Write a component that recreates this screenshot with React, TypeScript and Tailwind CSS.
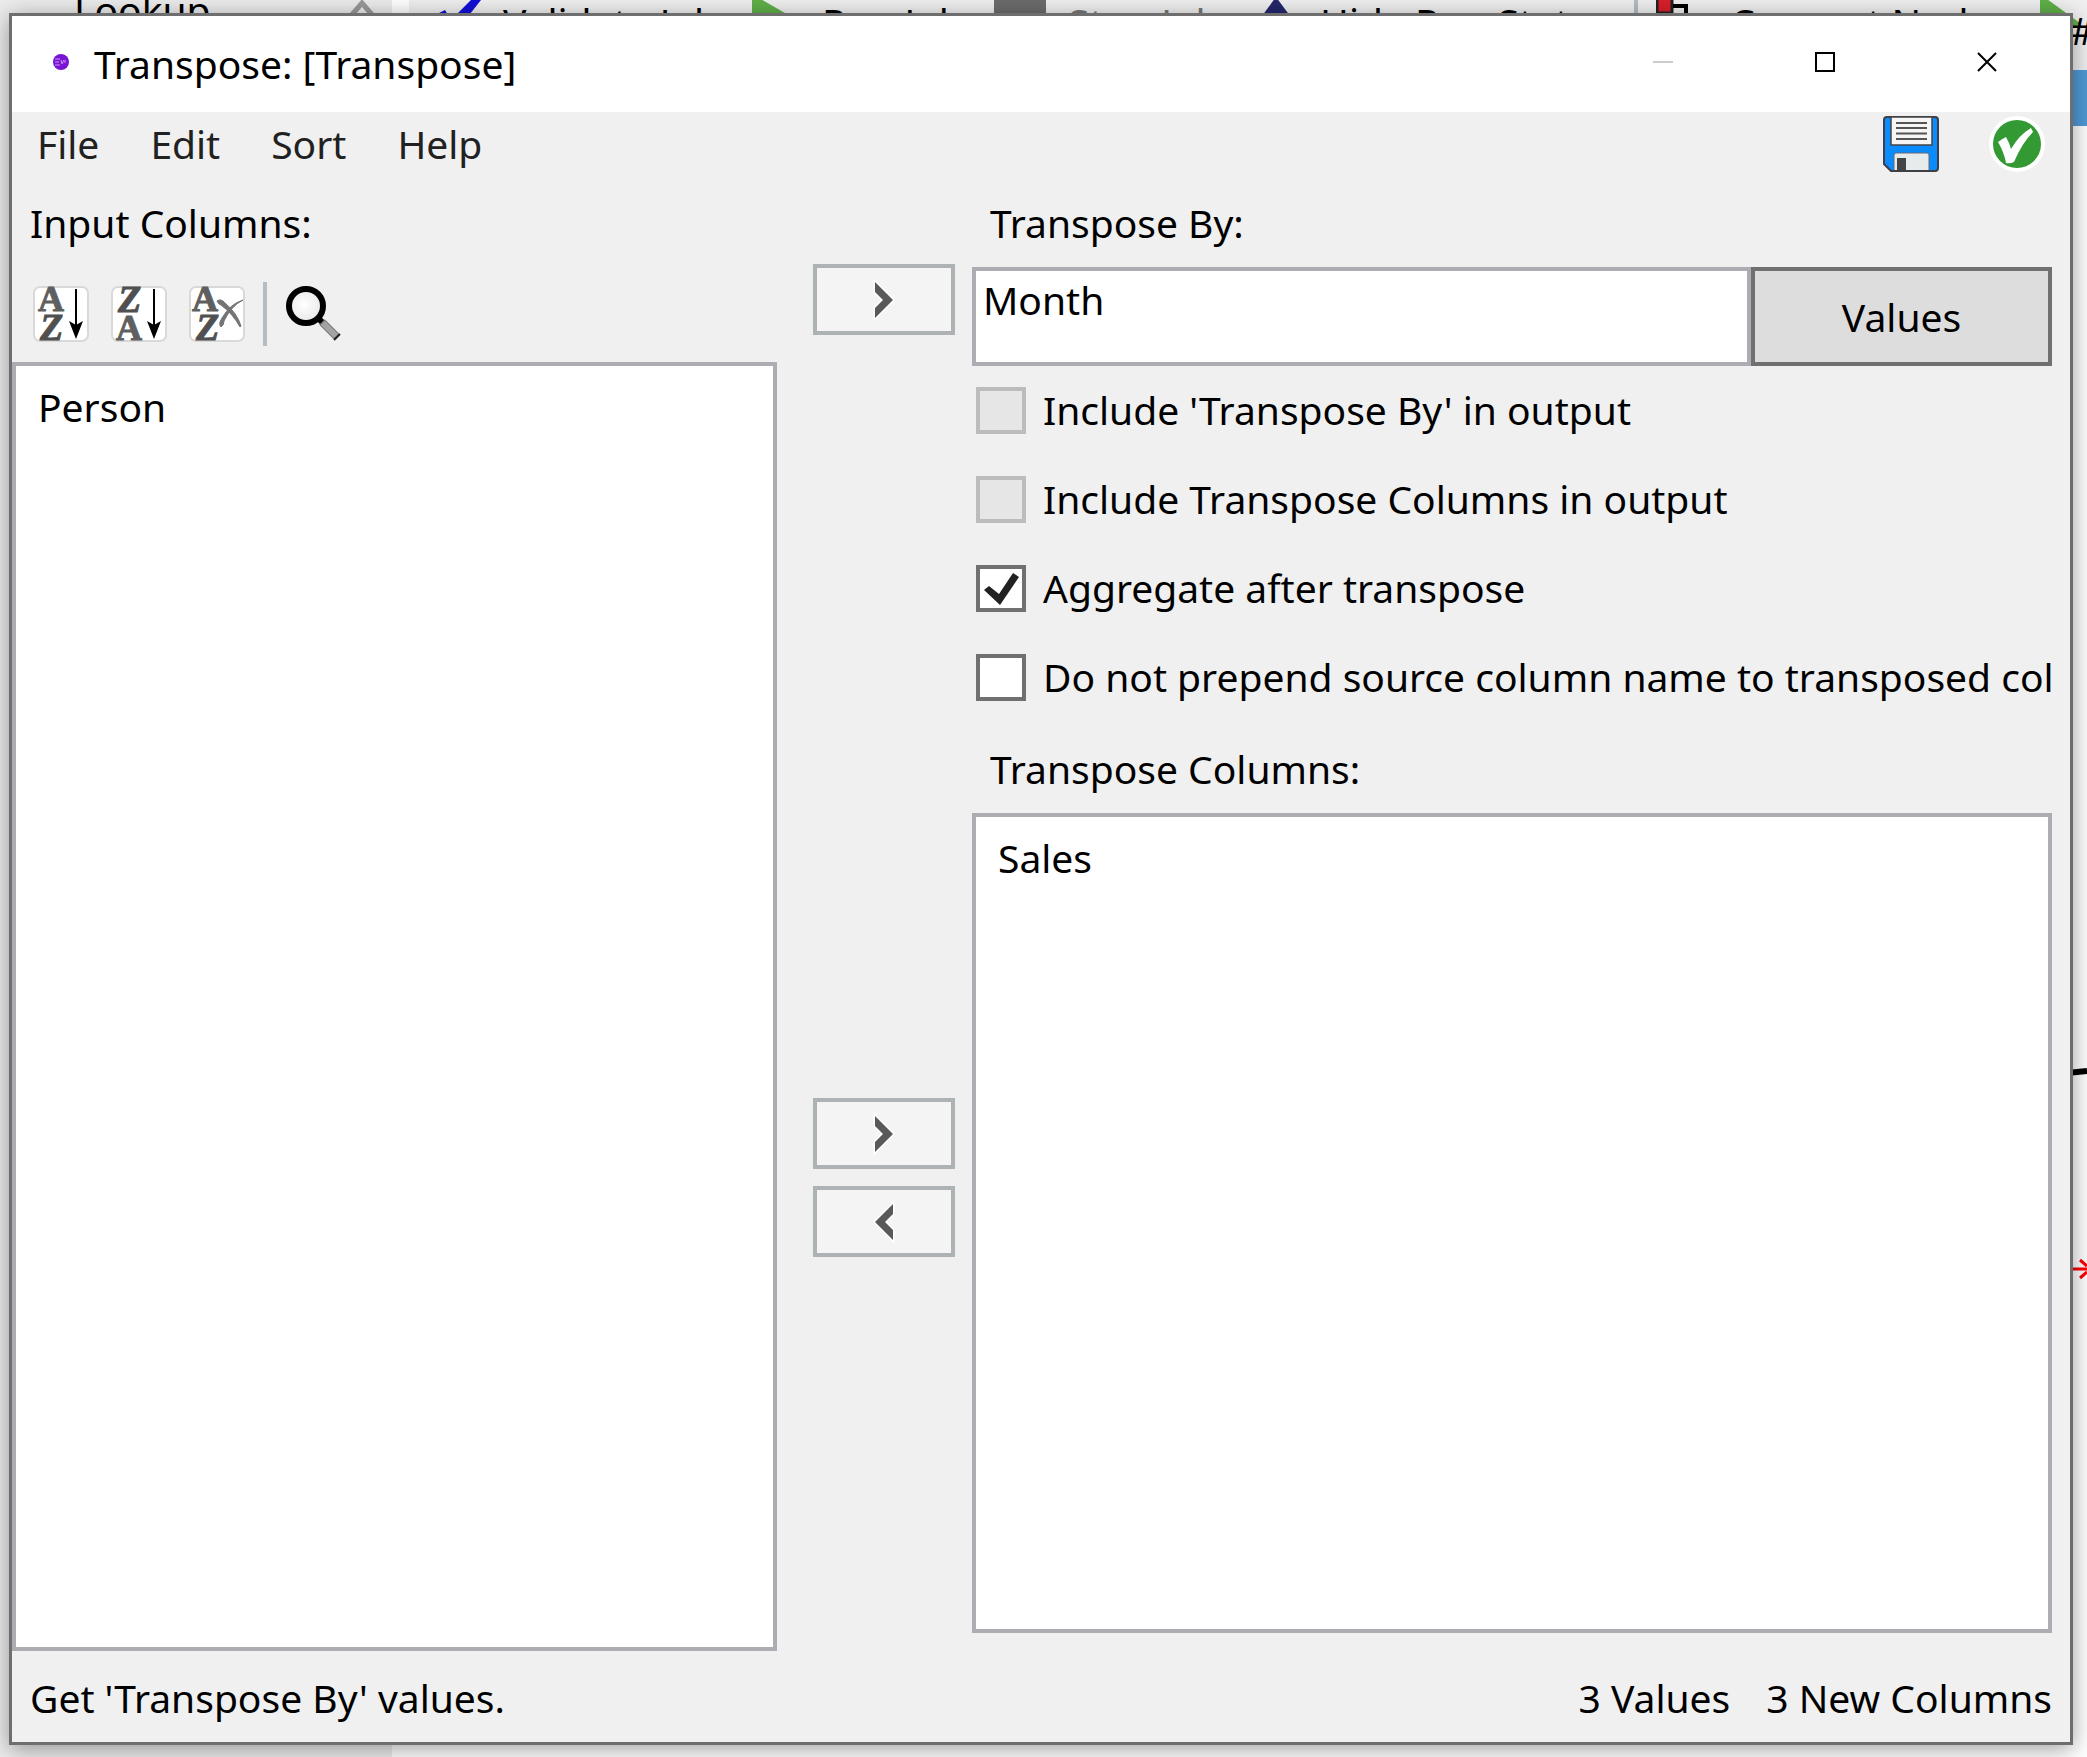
import { useState, type ReactNode } from 'react';

function SortTile({ children }: { children: ReactNode }) {
  return (
    <svg width="56" height="56" viewBox="0 0 56 56" aria-hidden="true">
      <rect x="1" y="1" width="54" height="54" rx="6" fill="#fff" stroke="#d9d9d9" strokeWidth="2" />
      {children}
    </svg>
  );
}

const serif = "'Liberation Serif', serif";

function LetterA({ x, y }: { x: number; y: number }) {
  return (
    <text x={x} y={y} fontFamily={serif} fontWeight="700" fontSize="36" fill="#5f5f5f" stroke="#5f5f5f" strokeWidth="1">
      A
    </text>
  );
}

function LetterZ({ x, y }: { x: number; y: number }) {
  return (
    <text x={x} y={y} fontFamily={serif} fontWeight="700" fontStyle="italic" fontSize="38" fill="#505050" stroke="#505050" strokeWidth="1">
      Z
    </text>
  );
}

function DownArrow() {
  return (
    <g fill="#000">
      <rect x="42" y="3" width="2" height="36" />
      <path d="M36 35 L43 39 L50 35 L43 53 Z" />
    </g>
  );
}

function SortAsc() {
  return (
    <SortTile>
      <LetterA x={5} y={25} />
      <LetterZ x={7} y={54} />
      <DownArrow />
    </SortTile>
  );
}

function SortDesc() {
  return (
    <SortTile>
      <LetterZ x={7} y={26} />
      <LetterA x={5} y={54} />
      <DownArrow />
    </SortTile>
  );
}

function SortClear() {
  return (
    <SortTile>
      <LetterA x={3} y={25} />
      <LetterZ x={7} y={54} />
      <path d="M28 15 Q32 12 36 17 Q48 27 52 40 L51 41 Q44 28 32 19 Q29 18 28 15 Z" fill="#747474" stroke="#747474" />
      <path d="M54 14 Q42 20 35 35 Q35 39 32 41 Q29 38 33 32 Q41 18 54 14 Z" fill="#747474" stroke="#747474" />
    </SortTile>
  );
}

function Magnifier() {
  return (
    <svg width="56" height="56" viewBox="0 0 56 56" aria-hidden="true">
      <defs>
        <radialGradient id="lens" cx="0.45" cy="0.45" r="0.6">
          <stop offset="0" stopColor="#fff" />
          <stop offset="1" stopColor="#e6e6e6" />
        </radialGradient>
      </defs>
      <path d="M33 33 L38 38" stroke="#000" strokeWidth="6" />
      <path d="M36 36 L51 51" stroke="#777" strokeWidth="8" />
      <path d="M37 37 L50 50" stroke="#a3a3a3" strokeWidth="6" />
      <path d="M48 54 L54 48" stroke="#222" strokeWidth="2" />
      <circle cx="20" cy="20" r="17" fill="url(#lens)" stroke="#000" strokeWidth="6" />
    </svg>
  );
}

function SaveIcon() {
  return (
    <svg width="56" height="56" viewBox="0 0 56 56" aria-hidden="true">
      <path
        d="M4 1 H52 Q55 1 55 4 V52 Q55 55 52 55 H8 L1 48 V4 Q1 1 4 1 Z"
        fill="#0a8cff"
        stroke="#3f3f46"
        strokeWidth="2"
      />
      <path d="M8 1 H49 V29 H8 Z" fill="#f5f5f5" stroke="#444" strokeWidth="1.5" />
      <path d="M13 7 H44 M13 12 H44 M13 17.5 H44 M13 23 H44" stroke="#555" strokeWidth="2" />
      <path d="M11 55 V39 Q11 37 13 37 H44 Q46 37 46 39 V55 Z" fill="#e8ebeb" stroke="#667" strokeWidth="1" />
      <rect x="14" y="42" width="9" height="13" fill="#444" />
      <path d="M8 55 H52" stroke="#3f3f46" strokeWidth="2" />
    </svg>
  );
}

function OkIcon() {
  return (
    <svg width="56" height="56" viewBox="0 0 56 56" aria-hidden="true">
      <circle cx="28" cy="28" r="28" fill="#fff" />
      <circle cx="28" cy="28" r="24" fill="#339a33" />
      <path
        d="M9 26 Q13 23 17 21 Q20 26 22 33 Q30 19 42 12 L44 16 Q33 27 25 46 Q21 48 17 47 Q15 36 9 26 Z"
        fill="#fff"
      />
    </svg>
  );
}

function Chevron({ left = false }: { left?: boolean }) {
  return (
    <svg width="26" height="44" viewBox="-4 -4 26 44" aria-hidden="true">
      <path
        d={left ? 'M18 0 L0 18 L18 36 V26 L10 18 L18 10 Z' : 'M0 0 L18 18 L0 36 V26 L8 18 L0 10 Z'}
        fill="#595959"
        stroke="#fff"
        strokeWidth="3"
        paintOrder="stroke"
      />
    </svg>
  );
}

function MoveButton({ label, left }: { label: string; left?: boolean }) {
  return (
    <button
      type="button"
      aria-label={label}
      className="flex h-[71px] w-[142px] items-center justify-center border-4 border-[#adb2b5] bg-[#f4f4f4]"
    >
      <Chevron left={left} />
    </button>
  );
}

function CheckRow({
  label,
  defaultChecked = false,
  disabled = false,
}: {
  label: string;
  defaultChecked?: boolean;
  disabled?: boolean;
}) {
  const [checked, setChecked] = useState(defaultChecked);
  return (
    <label className="flex items-center gap-[17px] pl-1 whitespace-nowrap">
      <span className="grid shrink-0">
        <input
          type="checkbox"
          checked={checked}
          disabled={disabled}
          onChange={(e) => setChecked(e.target.checked)}
          className="col-start-1 row-start-1 h-[47px] w-[50px] appearance-none border-4 border-[#707070] bg-white disabled:border-[#bcbcbc] disabled:bg-[#e6e6e6]"
        />
        {checked && (
          <svg
            width="50"
            height="47"
            viewBox="0 0 50 47"
            className="pointer-events-none col-start-1 row-start-1"
            aria-hidden="true"
          >
            <path d="M8 25 L13 21 L23 29 L37 8 L43 12 L24 40 Z" fill="#212121" />
          </svg>
        )}
      </span>
      <span>{label}</span>
    </label>
  );
}

function ListBox({ label, items }: { label: string; items: string[] }) {
  return (
    <ul
      role="listbox"
      aria-label={label}
      className="flex-1 overflow-auto border-4 border-[#acadb3] bg-white px-[22px] py-[15px]"
    >
      {items.map((item) => (
        <li key={item} role="option" aria-selected="false">
          {item}
        </li>
      ))}
    </ul>
  );
}

function Backdrop() {
  return (
    <div className="absolute inset-0 flex overflow-hidden bg-white whitespace-nowrap" aria-hidden="true">
      <div className="flex w-[392px] shrink-0 items-start justify-between bg-[#ececec] pr-4 pl-[74px]">
        <span className="-mt-4">Lookup</span>
        <svg width="28" height="24" viewBox="0 0 28 24">
          <path d="M2 17 L14 3 L26 17" fill="none" stroke="#999" strokeWidth="5" />
        </svg>
      </div>
      <div className="relative flex-1 pl-[17px]">
        <div className="flex h-[70px] bg-[#f0f0f0]">
          <div className="flex w-[343px] shrink-0 gap-[22px] pl-5">
            <svg width="52" height="40" viewBox="0 0 52 40" className="shrink-0">
              <path d="M4 16 L16 10 L22 20 L42 0 L52 0 L22 38 Z" fill="#1010d8" />
            </svg>
            <span className="-mt-1">Validate Job</span>
          </div>
          <div className="flex w-[242px] shrink-0 gap-[18px]">
            <svg width="52" height="52" viewBox="0 0 52 52" className="shrink-0">
              <path d="M0 -6 L52 24 L0 52 Z" fill="#5fb049" />
            </svg>
            <span className="-mt-1">Run Job</span>
          </div>
          <div className="flex w-[262px] shrink-0 gap-[22px] text-[#777]">
            <svg width="52" height="52" viewBox="0 0 52 52" className="shrink-0">
              <rect width="52" height="44" fill="#6c6c6c" />
            </svg>
            <span className="-mt-1">Stop Job</span>
          </div>
          <div className="flex w-[378px] shrink-0 gap-3">
            <svg width="52" height="52" viewBox="0 0 52 52" className="shrink-0">
              <path d="M20 -3 L40 24 L0 24 Z" fill="#23276b" />
            </svg>
            <span className="-mt-1">Hide Run Status</span>
          </div>
          <div className="w-1 shrink-0 bg-[#b5bcc4]" />
          <div className="flex w-[402px] shrink-0 gap-[22px] pl-[18px]">
            <svg width="52" height="40" viewBox="0 0 52 40" className="shrink-0">
              <rect x="1" y="-3" width="15" height="16" fill="#da1f2b" stroke="#222" strokeWidth="3" />
              <path d="M17 6 H30 V30" fill="none" stroke="#000" strokeWidth="4" />
            </svg>
            <span className="-mt-1">Connect Nodes</span>
          </div>
          <svg width="47" height="60" viewBox="0 0 47 60" className="shrink-0">
            <path d="M0 -6 L40 23 L0 52 Z" fill="#5fb049" />
          </svg>
        </div>
        <div className="h-14 bg-[#509ad6]" />
        <span className="absolute top-1 right-[-8px]">#</span>
        <svg width="20" height="12" viewBox="0 0 20 12" className="absolute top-[1067px] right-0">
          <path d="M0 6 L20 4" stroke="#000" strokeWidth="6" />
        </svg>
        <svg width="14" height="24" viewBox="0 0 14 24" className="absolute top-[1257px] right-0">
          <path d="M0 12 H14 M7 3 L14 9 M7 21 L14 15" stroke="#f00" strokeWidth="3" />
        </svg>
      </div>
    </div>
  );
}

export default function App() {
  const [transposeBy, setTransposeBy] = useState('Month');
  return (
    <div className="relative flex h-screen flex-col overflow-hidden pt-[13px] pr-[14px] pb-3 pl-[9px] font-['Noto_Sans','Open_Sans',sans-serif] text-[39px] leading-[52px] text-black">
      <Backdrop />
      <main className="relative flex flex-1 flex-col border-3 border-[#6e6e6e] bg-[#f0f0f0] shadow-[0_4px_22px_rgba(0,0,0,0.38)]">
        <header className="flex h-24 items-start bg-white">
          <svg width="16" height="16" viewBox="0 0 16 16" className="mt-[38px] mr-[25px] ml-[41px] shrink-0" aria-hidden="true">
            <circle cx="8" cy="8" r="8" fill="#7a12d4" />
            <path d="M2 5 H7 M2 8 H6 M2 11 H7 M8 6 L9 10 L11 6 M12 6 V9" fill="none" stroke="#c79af0" strokeWidth="1" />
          </svg>
          <h1 className="flex-1 pt-[22px]">Transpose: [Transpose]</h1>
          <div className="flex h-[92px] pr-0.5">
            <button type="button" aria-label="Minimize" disabled className="flex w-[162px] items-center justify-center">
              <svg width="20" height="20" viewBox="0 0 20 20">
                <path d="M0 10 H20" stroke="#ccc" strokeWidth="2" />
              </svg>
            </button>
            <button type="button" aria-label="Maximize" className="flex w-[162px] items-center justify-center">
              <svg width="20" height="20" viewBox="0 0 20 20">
                <rect x="1" y="1" width="18" height="18" fill="none" stroke="#000" strokeWidth="2" />
              </svg>
            </button>
            <button type="button" aria-label="Close" className="flex w-[162px] items-center justify-center">
              <svg width="20" height="20" viewBox="0 0 20 20">
                <path d="M1 1 L19 19 M19 1 L1 19" stroke="#000" strokeWidth="2" />
              </svg>
            </button>
          </div>
        </header>

        <div className="flex h-16 items-center justify-between pr-[25px] pl-[25px]">
          <nav className="flex gap-[51px] text-[#212121]">
            <button type="button">File</button>
            <button type="button">Edit</button>
            <button type="button">Sort</button>
            <button type="button">Help</button>
          </nav>
          <div className="flex gap-[50px]">
            <button type="button" aria-label="Save">
              <SaveIcon />
            </button>
            <button type="button" aria-label="OK">
              <OkIcon />
            </button>
          </div>
        </div>

        <div className="grid min-h-0 flex-1 grid-cols-[minmax(0,765fr)_195px_minmax(0,1080fr)] pr-[18px]">
          <section className="flex flex-col pt-[21px]">
            <h2 className="pl-[18px]">Input Columns:</h2>
            <div className="mt-[33px] mb-4 flex h-16 items-center pl-[21px]">
              <div className="flex gap-[22px]">
                <button type="button" aria-label="Sort ascending">
                  <SortAsc />
                </button>
                <button type="button" aria-label="Sort descending">
                  <SortDesc />
                </button>
                <button type="button" aria-label="Clear sort">
                  <SortClear />
                </button>
              </div>
              <div className="mr-[19px] ml-[18px] h-16 w-1 bg-[#b5bcc4]" />
              <button type="button" aria-label="Search">
                <Magnifier />
              </button>
            </div>
            <ListBox label="Input Columns" items={['Person']} />
          </section>

          <section className="flex flex-col pt-[88px] pl-9">
            <MoveButton label="Set transpose by" />
            <div className="flex-[763]" />
            <div className="flex flex-col gap-[17px]">
              <MoveButton label="Add transpose column" />
              <MoveButton label="Remove transpose column" left />
            </div>
            <div className="flex-[394]" />
          </section>

          <section className="flex flex-col pt-[21px] pb-[18px]">
            <label htmlFor="transpose-by" className="pl-[18px]">
              Transpose By:
            </label>
            <div className="mt-[18px] flex h-[99px]">
              <input
                id="transpose-by"
                value={transposeBy}
                onChange={(e) => setTransposeBy(e.target.value)}
                className="min-w-0 flex-1 border-4 border-[#acadb3] bg-white px-[7px] pt-[3px] pb-9 outline-none"
              />
              <button type="button" className="w-[301px] border-4 border-[#707070] bg-[#ddd]">
                Values
              </button>
            </div>
            <div className="mt-[18px] flex flex-col gap-[37px] overflow-hidden">
              <CheckRow label="Include 'Transpose By' in output" disabled />
              <CheckRow label="Include Transpose Columns in output" disabled />
              <CheckRow label="Aggregate after transpose" defaultChecked />
              <CheckRow label="Do not prepend source column name to transposed columns" />
            </div>
            <h2 className="mt-10 mb-[18px] pl-[18px]">Transpose Columns:</h2>
            <ListBox label="Transpose Columns" items={['Sales']} />
          </section>
        </div>

        <footer className="flex h-[91px] items-center justify-between px-[18px] pt-0.5">
          <span>Get 'Transpose By' values.</span>
          <div className="flex gap-9">
            <span>3 Values</span>
            <span>3 New Columns</span>
          </div>
        </footer>
      </main>
    </div>
  );
}
